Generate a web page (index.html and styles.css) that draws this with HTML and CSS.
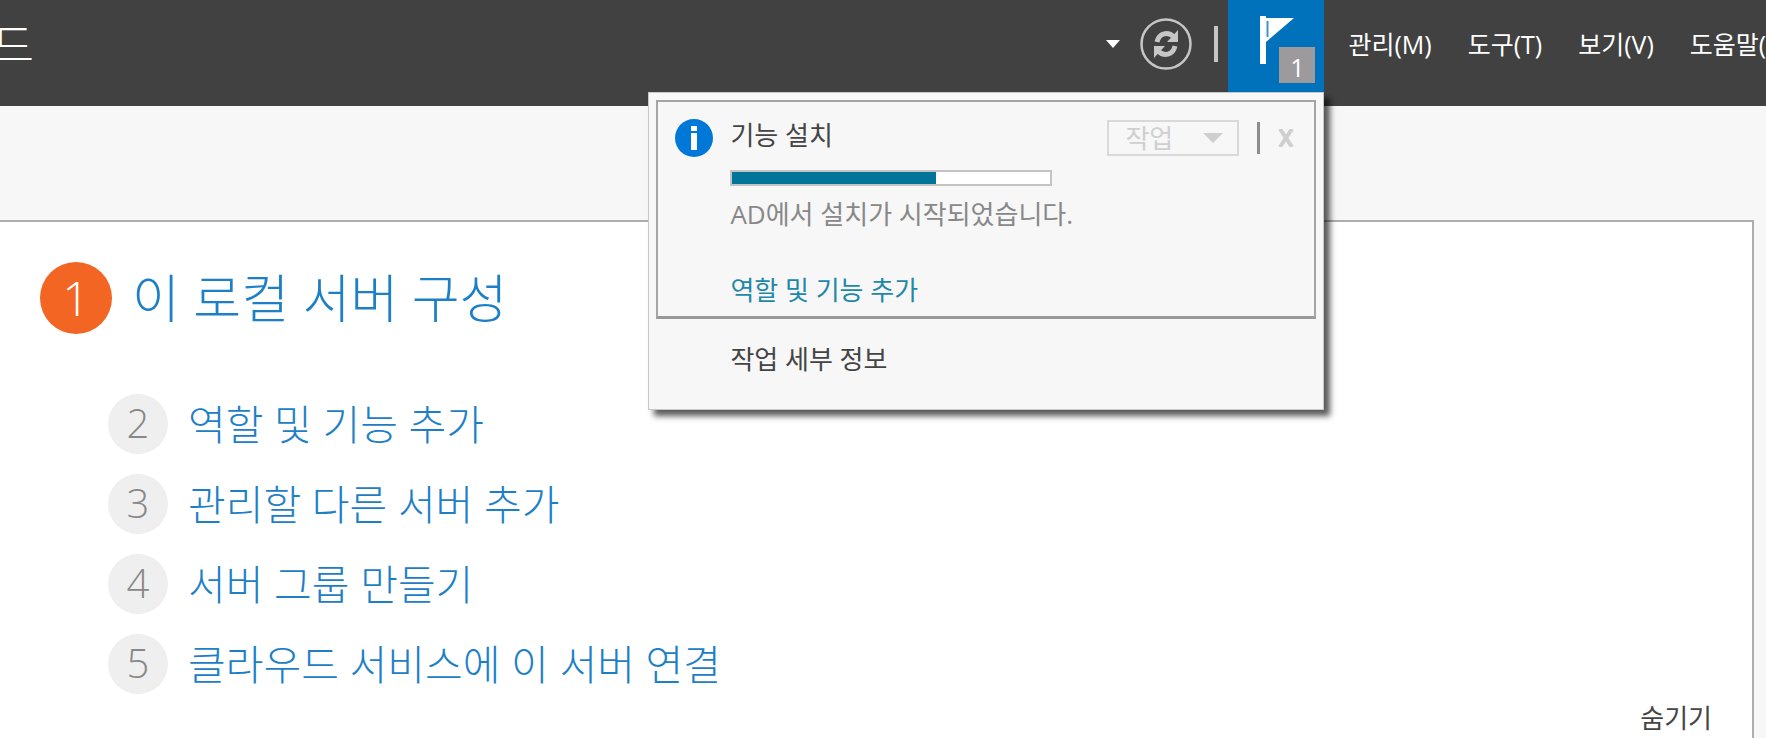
FILE: index.html
```html
<!DOCTYPE html>
<html lang="ko">
  <head>
    <meta charset="UTF-8" />
    <meta name="viewport" content="width=device-width, initial-scale=1.0" />
    <title>서버 관리자</title>
    <link rel="stylesheet" href="styles.css">
  </head>
  <body>
    <header class="topbar">
      <h1 class="page-title"><span>대시보드</span></h1>
      <button type="button" class="icon-button history" aria-label="기록">
        <svg width="14" height="8" viewBox="0 0 14 8"><path d="M0 0h14L7 8z" fill="#fff" /></svg>
      </button>
      <button type="button" class="icon-button refresh" aria-label="새로 고침">
        <svg width="52" height="52" viewBox="0 0 52 52" fill="none" stroke="#c6c6c6">
          <circle cx="26" cy="26" r="24.5" stroke-width="2.5" />
          <path d="M17 24c2-9 11-11 17-5" stroke-width="5" />
          <path d="M35 28c-2 9-11 11-17 5" stroke-width="5" />
          <path d="M38 12v12H27z" fill="#c6c6c6" stroke="none" />
          <path d="M14 40V28h11z" fill="#c6c6c6" stroke="none" />
        </svg>
      </button>
      <span class="divider"></span>
      <div class="notifications">
        <button type="button" class="flag-button" aria-label="알림">
          <svg width="36" height="48" viewBox="0 0 36 48">
            <path d="M0 0h6v48H0z" fill="#fff" />
            <path d="M6 2h28L6 26z" fill="#fff" />
            <path d="M7.5 5v16" stroke="#3d94cd" stroke-width="2" />
          </svg>
          <span class="badge">1</span>
        </button>
        <div class="popup">
          <div class="task">
            <svg class="info-icon" width="38" height="38" viewBox="0 0 38 38">
              <circle cx="19" cy="19" r="19" fill="#0078d7" />
              <path d="M16 7h6v5h-6zM16 14h6v17h-6z" fill="#fff" />
            </svg>
            <div class="task-body">
              <div class="task-head">
                <label for="progress" class="task-name">기능 설치</label>
                <button type="button" class="task-button" disabled>
                  작업
                  <svg width="20" height="10" viewBox="0 0 20 10"><path d="M0 0h20L10 10z" fill="#cfcfcf" /></svg>
                </button>
                <span class="task-divider"></span>
                <button type="button" class="close" aria-label="닫기" disabled>
                  <svg width="16" height="18" viewBox="0 0 16 18"><path d="M2 0l12 18M14 0L2 18" stroke="#cfcfcf" stroke-width="4" /></svg>
                </button>
              </div>
              <progress id="progress" class="progress" value="64" max="100"></progress>
              <p class="task-status">AD에서 설치가 시작되었습니다.</p>
              <a href="#" class="task-link">역할 및 기능 추가</a>
            </div>
          </div>
          <a href="#" class="details">작업 세부 정보</a>
        </div>
      </div>
      <nav class="menu">
        <a href="#">관리(M)</a>
        <a href="#">도구(T)</a>
        <a href="#">보기(V)</a>
        <a href="#">도움말(H)</a>
      </nav>
    </header>

    <main class="panel">
      <a href="#" class="step main-step"><span class="number">1</span>이 로컬 서버 구성</a>
      <div class="steps">
        <a href="#" class="step"><span class="number">2</span>역할 및 기능 추가</a>
        <a href="#" class="step"><span class="number">3</span>관리할 다른 서버 추가</a>
        <a href="#" class="step"><span class="number">4</span>서버 그룹 만들기</a>
        <a href="#" class="step"><span class="number">5</span>클라우드 서비스에 이 서버 연결</a>
      </div>
      <button type="button" class="hide-button">숨기기</button>
    </main>
  </body>
</html>
```

FILE: styles.css
```css
* {
  box-sizing: border-box;
}

body {
  margin: 0;
  min-height: 100vh;
  display: flex;
  flex-direction: column;
  overflow-x: hidden;
  font-family: "Open Sans", "Noto Sans CJK KR", sans-serif;
  font-size: 26px;
  line-height: 36px;
  background-color: #f7f7f7;
}

a {
  text-decoration: none;
}

button {
  padding: 0;
  border: none;
  background: none;
  font: inherit;
}

svg {
  display: block;
}

/* Top bar */
.topbar {
  display: flex;
  height: 106px;
  background-color: #414141;
}

.page-title {
  display: flex;
  justify-content: flex-end;
  width: 34px;
  margin: 0 auto 0 0;
  padding-top: 16px;
  overflow: hidden;
  color: #fff;
  font-size: 46px;
  font-weight: 300;
  line-height: 56px;
  white-space: nowrap;
}

.icon-button {
  display: flex;
  align-items: center;
  height: 88px;
  margin-right: 20px;
}

.refresh {
  margin-right: 22px;
}

.divider {
  width: 4px;
  height: 36px;
  margin: 26px 10px 0 0;
  background-color: #c6c6c6;
}

.notifications {
  position: relative;
}

.flag-button {
  display: block;
  position: relative;
  width: 96px;
  height: 92px;
  padding: 16px 0 28px 32px;
  background-color: #0072bc;
}

.badge {
  position: absolute;
  right: 9px;
  bottom: 9px;
  width: 36px;
  height: 36px;
  background-color: #9c9a9c;
  color: #fff;
  font-size: 25px;
  line-height: 40px;
  text-align: center;
}

.menu {
  display: flex;
  gap: 36px;
  margin-right: -26px;
  padding: 26px 0 0 24px;
}

.menu a {
  color: #fff;
  font-size: 25px;
  white-space: nowrap;
}

/* Notification popup */
.popup {
  position: absolute;
  top: 92px;
  right: 0;
  z-index: 1;
  width: 676px;
  padding: 7px 7px 32px;
  border: 1px solid #c8c8c8;
  background-color: #f7f7f7;
  box-shadow: 6px 6px 6px rgba(0, 0, 0, 0.65);
}

.task {
  display: flex;
  gap: 17px;
  margin-bottom: 22px;
  padding: 16px 20px 8px 17px;
  border: 2px solid #a5a5a5;
  border-bottom: 3px solid #999;
}

.info-icon {
  margin-top: 1px;
}

.task-body {
  flex: 1;
}

.task-head {
  display: flex;
  align-items: center;
  height: 40px;
}

.task-name {
  align-self: flex-start;
  margin-right: auto;
  color: #444;
  line-height: 34px;
}

.task-button {
  display: flex;
  align-items: center;
  justify-content: space-between;
  width: 132px;
  height: 36px;
  padding: 0 14px 0 16px;
  border: 2px solid #d9d9d9;
  color: #cfcfcf;
}

.task-divider {
  width: 3px;
  height: 32px;
  margin: 0 18px;
  background-color: #8c8c8c;
}

.progress {
  display: block;
  width: 322px;
  height: 16px;
  margin: 12px 0 10px;
  border: 2px solid #c4c4c4;
  background-color: #fff;
  appearance: none;
}

.progress::-webkit-progress-bar {
  background-color: #fff;
}

.progress::-webkit-progress-value {
  background-color: #007599;
}

.task-status {
  margin: 0 0 40px;
  color: #888;
}

.task-link {
  color: #1f88a8;
}

.details {
  display: block;
  margin-left: 74px;
  color: #444;
}

/* Quick start panel */
.panel {
  flex: 1;
  display: flex;
  flex-direction: column;
  align-items: flex-start;
  margin: 114px 12px 0 0;
  padding: 40px 40px 2px;
  border: 2px solid #adadad;
  border-width: 2px 2px 0 0;
  background-color: #fff;
}

.step {
  display: flex;
  align-items: center;
  gap: 20px;
  color: #1d80c7;
  font-size: 41px;
  font-weight: 300;
  line-height: 58px;
}

.number {
  width: 60px;
  height: 60px;
  border-radius: 50%;
  background-color: #efefef;
  color: #888;
  font-size: 40px;
  text-align: center;
}

.main-step {
  gap: 20px;
  font-size: 52px;
  line-height: 72px;
}

.main-step .number {
  width: 72px;
  height: 72px;
  background-color: #f26522;
  color: #fff;
  font-size: 48px;
}

.steps {
  display: flex;
  flex-direction: column;
  gap: 20px;
  margin: 60px 0 0 68px;
}

.hide-button {
  margin: auto 0 0 auto;
  color: #444;
}
```
